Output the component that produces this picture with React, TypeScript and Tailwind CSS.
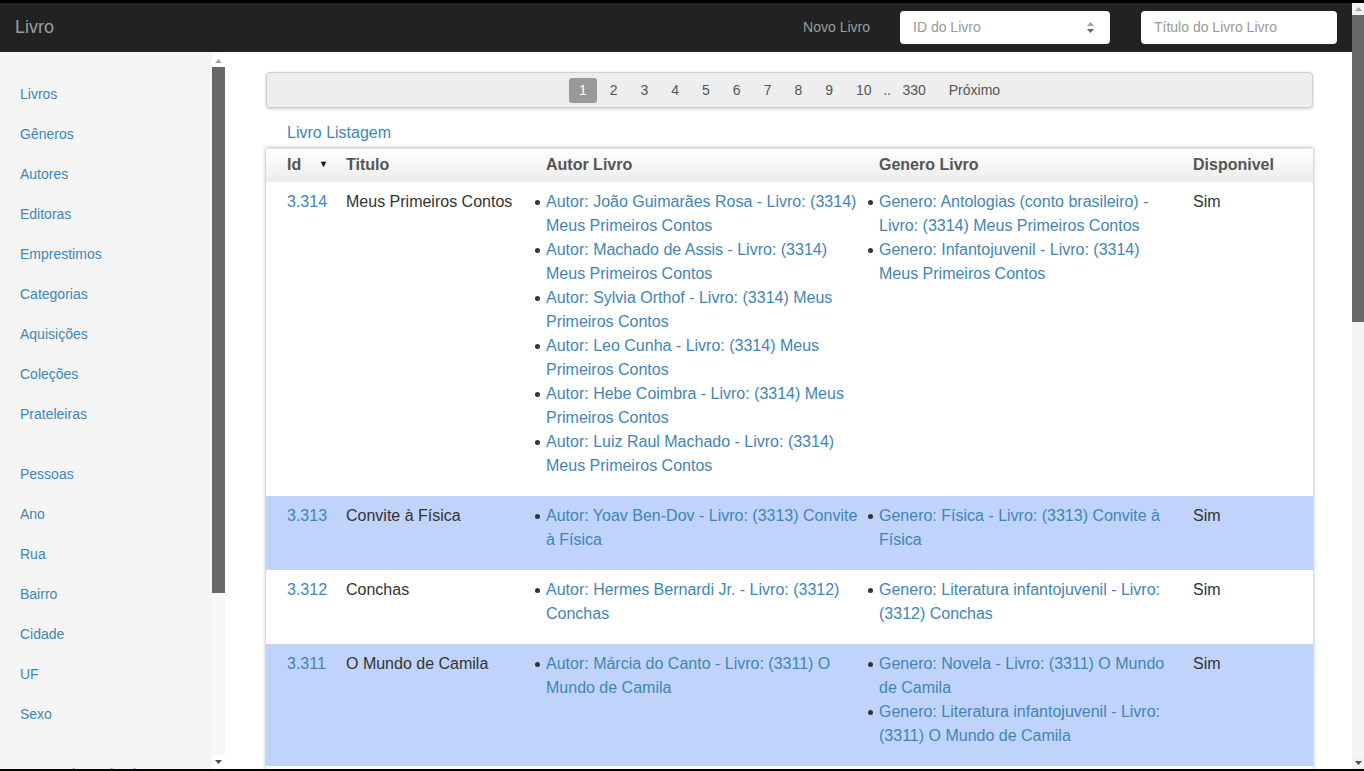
import React from "react";

type Livro = {
  id: string;
  titulo: string;
  autores: string[];
  generos: string[];
  disponivel: string;
  destaque?: boolean;
};

const livros: Livro[] = [
  {
    id: "3.314",
    titulo: "Meus Primeiros Contos",
    autores: [
      "Autor: João Guimarães Rosa - Livro: (3314) Meus Primeiros Contos",
      "Autor: Machado de Assis - Livro: (3314) Meus Primeiros Contos",
      "Autor: Sylvia Orthof - Livro: (3314) Meus Primeiros Contos",
      "Autor: Leo Cunha - Livro: (3314) Meus Primeiros Contos",
      "Autor: Hebe Coimbra - Livro: (3314) Meus Primeiros Contos",
      "Autor: Luiz Raul Machado - Livro: (3314) Meus Primeiros Contos",
    ],
    generos: [
      "Genero: Antologias (conto brasileiro) - Livro: (3314) Meus Primeiros Contos",
      "Genero: Infantojuvenil - Livro: (3314) Meus Primeiros Contos",
    ],
    disponivel: "Sim",
  },
  {
    id: "3.313",
    titulo: "Convite à Física",
    autores: ["Autor: Yoav Ben-Dov - Livro: (3313) Convite à Física"],
    generos: ["Genero: Física - Livro: (3313) Convite à Física"],
    disponivel: "Sim",
    destaque: true,
  },
  {
    id: "3.312",
    titulo: "Conchas",
    autores: ["Autor: Hermes Bernardi Jr. - Livro: (3312) Conchas"],
    generos: ["Genero: Literatura infantojuvenil - Livro: (3312) Conchas"],
    disponivel: "Sim",
  },
  {
    id: "3.311",
    titulo: "O Mundo de Camila",
    autores: ["Autor: Márcia do Canto - Livro: (3311) O Mundo de Camila"],
    generos: [
      "Genero: Novela - Livro: (3311) O Mundo de Camila",
      "Genero: Literatura infantojuvenil - Livro: (3311) O Mundo de Camila",
    ],
    disponivel: "Sim",
    destaque: true,
  },
  {
    id: "3.310",
    titulo: "A Casa",
    autores: ["Autor: Vinicius de Moraes - Livro: (3310) A Casa"],
    generos: ["Genero: Poesia - Livro: (3310) A Casa"],
    disponivel: "Sim",
  },
];

const menu1 = ["Livros", "Gêneros", "Autores", "Editoras", "Emprestimos", "Categorias", "Aquisições", "Coleções", "Prateleiras"];
const menu2 = ["Pessoas", "Ano", "Rua", "Bairro", "Cidade", "UF", "Sexo"];

const paginas = ["1", "2", "3", "4", "5", "6", "7", "8", "9", "10"];

// setinhas das barras de rolagem
const SetaCima = () => (
  <svg width="7" height="4" viewBox="0 0 7 4">
    <path d="M0 4 L3.5 0 L7 4 Z" fill="#a3a3a3" />
  </svg>
);

const SetaBaixo = ({ cor = "#505050" }: { cor?: string }) => (
  <svg width="7" height="4" viewBox="0 0 7 4">
    <path d="M0 0 L7 0 L3.5 4 Z" fill={cor} />
  </svg>
);

const Lista = ({ itens, pl }: { itens: string[]; pl: string }) => (
  <ul className={`${pl} mb-[10px]`}>
    {itens.map((t) => (
      <li key={t} className="flex">
        <span className="mt-[10px] mr-[6px] h-[5px] w-[5px] shrink-0 rounded-full bg-[#333]" />
        <a href="#" className="text-[#3f86b6]">{t}</a>
      </li>
    ))}
  </ul>
);

export default function App() {
  return (
    <div className="flex h-[771px] w-[1364px] overflow-hidden bg-black pt-[3px] pb-[2px] font-['Liberation_Sans',Arial,sans-serif]">
      <div className="flex min-w-0 flex-1 flex-col">
        {/* Navbar */}
        <nav className="flex h-[49px] shrink-0 items-center bg-[#222] pl-[15px] pr-[15px]">
          <span className="text-[18px] text-[#9d9d9d]">Livro</span>
          <div className="ml-auto flex items-center">
            <a href="#" className="text-[14px] text-[#9d9d9d]">Novo Livro</a>
            <div className="ml-[30px] flex h-[33px] w-[210px] items-center rounded-[4px] bg-white pl-[13px] pr-[16px]">
              <span className="text-[14px] text-[#999]">ID do Livro</span>
              <div className="ml-auto flex flex-col gap-[3px]">
                <SetaCima />
                <SetaBaixo cor="#666" />
              </div>
            </div>
            <div className="ml-[31px] flex h-[33px] w-[196px] items-center rounded-[4px] bg-white pl-[13px]">
              <span className="text-[14px] text-[#999]">Título do Livro Livro</span>
            </div>
          </div>
        </nav>

        <div className="flex min-h-0 flex-1">
          {/* Sidebar */}
          <aside className="w-[212px] shrink-0 overflow-hidden bg-[#f5f5f5] pt-[22px]">
            {menu1.map((m) => (
              <a key={m} href="#" className="block px-[20px] py-[10px] text-[14px] leading-[20px] text-[#3f86b6]">{m}</a>
            ))}
            <div className="h-[20px]" />
            {menu2.map((m) => (
              <a key={m} href="#" className="block px-[20px] py-[10px] text-[14px] leading-[20px] text-[#3f86b6]">{m}</a>
            ))}
            <div className="h-[20px]" />
            <a href="#" className="block whitespace-nowrap px-[20px] py-[10px] text-[14px] leading-[20px] text-[#3f86b6]">Emprestimos de Livros</a>
          </aside>
          <div className="flex w-[13px] shrink-0 flex-col bg-[#f7f7f7] pt-[2px]">
            <div className="flex h-[13px] items-center justify-center bg-white">
              <SetaCima />
            </div>
            <div className="h-[526px] bg-[#686868]" />
            <div className="flex-1" />
            <div className="flex h-[14px] items-center justify-center bg-white">
              <SetaBaixo />
            </div>
          </div>

          {/* Conteúdo */}
          <main className="min-w-0 flex-1 overflow-hidden bg-white pl-[41px] pr-[39px] pt-[20px]">
            <div className="flex h-[36px] items-center justify-center rounded-[4px] border border-[#d0d0d0] bg-[#eee] shadow-[0_1px_3px_rgba(0,0,0,0.2)] text-[14px] text-[#555]">
              {paginas.map((p) => (
                <span
                  key={p}
                  className={
                    p === "1"
                      ? "mx-[1.5px] flex h-[25px] items-center rounded-[3px] bg-[#999] px-[10px] text-white"
                      : "mx-[1.5px] px-[10px]"
                  }
                >
                  {p}
                </span>
              ))}
              <span>..</span>
              <span className="mx-[1.5px] px-[10px]">330</span>
              <span className="mx-[1.5px] px-[10px]">Próximo</span>
            </div>

            <h2 className="mt-[13px] mb-[3px] pl-[21px] text-[16px] leading-[24px] text-[#3f86b6]">Livro Listagem</h2>

            <div className="bg-white shadow-[0_0_4px_rgba(0,0,0,0.35)]">
              {/* cabeçalho */}
              <div className="flex h-[34px] items-center border-t border-[#e5e5e5] bg-gradient-to-b from-white to-[#ececec] pb-[2px] text-[16px] font-bold text-[#555]">
                <div className="flex w-[72px] shrink-0 items-center justify-between pl-[21px] pr-[10px]">
                  <span>Id</span>
                  <span className="text-[9px] text-[#111]">▼</span>
                </div>
                <div className="w-[182px] shrink-0 pl-[8px]">Titulo</div>
                <div className="w-[341px] shrink-0 pl-[26px]">Autor Livro</div>
                <div className="w-[324px] shrink-0 pl-[18px]">Genero Livro</div>
                <div className="flex-1 pl-[8px]">Disponivel</div>
              </div>

              {livros.map((l) => (
                <div key={l.id} className={`flex py-[8px] text-[16px] leading-[24px] ${l.destaque ? "bg-[#bfd3fb]" : "bg-white"}`}>
                  <div className="w-[72px] shrink-0 pl-[21px]">
                    <a href="#" className="text-[#3f86b6]">{l.id}</a>
                  </div>
                  <div className="w-[182px] shrink-0 pl-[8px] text-[#333]">{l.titulo}</div>
                  <div className="w-[341px] shrink-0 pr-[2px]">
                    <Lista itens={l.autores} pl="pl-[15px]" />
                  </div>
                  <div className="w-[324px] shrink-0 pr-[6px]">
                    <Lista itens={l.generos} pl="pl-[7px]" />
                  </div>
                  <div className="flex-1 pl-[8px] text-[#333]">{l.disponivel}</div>
                </div>
              ))}
            </div>
          </main>
        </div>
      </div>

      {/* barra de rolagem da página */}
      <div className="flex w-[12px] shrink-0 flex-col bg-[#f5f5f5]">
        <div className="flex h-[12px] items-center justify-center bg-[#f1f1f1]">
          <SetaCima />
        </div>
        <div className="h-[307px] bg-[#686868]" />
        <div className="flex-1" />
        <div className="flex h-[12px] items-center justify-center bg-[#f1f1f1]">
          <SetaBaixo />
        </div>
      </div>
    </div>
  );
}
